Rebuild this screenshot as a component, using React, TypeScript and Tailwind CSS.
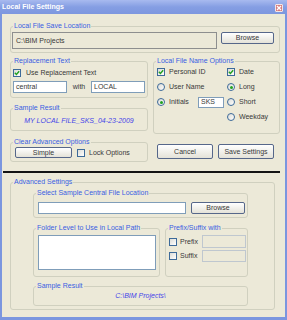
import React from 'react';

const Group: React.FC<{ title: string; className?: string; children?: React.ReactNode }> = ({ title, className = '', children }) => (
  <fieldset className={`min-w-0 border border-[#D0D0BF] rounded-[3px] ${className}`}>
    <legend className="ml-[2px] px-[1px] h-[8px] leading-[8px] text-[#3A5EE2]">{title}</legend>
    {children}
  </fieldset>
);

const Check: React.FC<{ checked?: boolean }> = ({ checked }) => (
  <span className="w-[8px] h-[8px] shrink-0 border border-[#3D6A99] bg-gradient-to-br from-[#DCDCD7] to-white flex items-center justify-center">
    {checked && (
      <svg width="6" height="6" viewBox="0 0 6 6">
        <path d="M0.8 2.8 L2.4 4.4 L5.2 1.2" stroke="#21A121" strokeWidth="1.4" fill="none" />
      </svg>
    )}
  </span>
);

const Radio: React.FC<{ checked?: boolean }> = ({ checked }) => (
  <span className="w-[8px] h-[8px] shrink-0 rounded-full border border-[#3D6A99] bg-gradient-to-br from-[#DCDCD7] to-white flex items-center justify-center">
    {checked && <span className="w-[3px] h-[3px] rounded-full bg-[#21A121]" />}
  </span>
);

const Button: React.FC<{ label: string; className?: string }> = ({ label, className = '' }) => (
  <div className={`shrink-0 flex items-center justify-center border border-[#56678A] rounded-[2px] bg-gradient-to-b from-white to-[#E4E2D8] ${className}`}>
    {label}
  </div>
);

const TextBox: React.FC<{ value?: string; className?: string }> = ({ value = '', className = '' }) => (
  <div className={`shrink-0 flex items-center px-[2px] border border-[#7F9DB9] bg-white ${className}`}>
    {value}
  </div>
);

export default function App() {
  return (
    <div className="w-[287px] h-[320px] overflow-hidden flex flex-col bg-[#7B96DF] font-['Liberation_Sans',Arial,sans-serif] text-[7px] leading-[8px] text-[#383838]">
      {/* Title bar */}
      <div className="h-[14px] shrink-0 flex items-center justify-between pl-[2px] pr-[4px] bg-gradient-to-b from-[#A8BAEF] via-[#859EE3] to-[#7D97DF]">
        <span className="font-bold text-white">Local File Settings</span>
        <span className="w-[8px] h-[8px] mt-[1px] rounded-[1px] border border-[#F3E6E6] bg-[#D57B7E] flex items-center justify-center">
          <svg width="6" height="6" viewBox="0 0 6 6">
            <path d="M1 1 L5 5 M5 1 L1 5" stroke="white" strokeWidth="1.3" />
          </svg>
        </span>
      </div>

      <div className="flex-1 mx-[2px] mb-[3px] bg-[#ECE9D8] flex flex-col">
        {/* Local File Save Location */}
        <Group title="Local File Save Location" className="mt-[8px] ml-[8px] mr-[5px]">
          <div className="pt-[2px] pl-[1px] pr-[5px] pb-[3px] flex items-start gap-[4px]">
            <div className="w-[205px] h-[17px] shrink-0 flex items-center px-[3px] border border-[#8E8F8F] bg-[#ECE9D8]">C:\BIM Projects</div>
            <Button label="Browse" className="w-[53px] h-[12px]" />
          </div>
        </Group>

        <div className="mt-[4px] ml-[8px] mr-[5px] flex items-start">
          {/* Left column */}
          <div className="w-[138px] shrink-0 flex flex-col">
            <Group title="Replacement Text">
              <div className="pt-[4px] pl-[2px] pr-[2px] pb-[4px]">
                <div className="h-[7px] flex items-center gap-[5px]">
                  <Check checked />
                  <span>Use Replacement Text</span>
                </div>
                <div className="mt-[5px] h-[12px] flex">
                  <TextBox value="central" className="w-[54px] h-[12px]" />
                  <span className="w-[24px] flex items-center justify-center">with</span>
                  <TextBox value="LOCAL" className="w-[54px] h-[12px]" />
                </div>
              </div>
            </Group>

            <Group title="Sample Result" className="mt-[6px]">
              <div className="pt-[5px] pb-[5px] h-[18px] text-center italic text-[#4444E8]">MY LOCAL FILE_SKS_04-23-2009</div>
            </Group>

            <Group title="Clear Advanced Options" className="mt-[7px]">
              <div className="pt-[1px] pl-[4px] pb-[3px] h-[15px] flex items-center">
                <Button label="Simple" className="w-[57px] h-[11px]" />
                <span className="ml-[5px]"><Check /></span>
                <span className="ml-[4px]">Lock Options</span>
              </div>
            </Group>
          </div>

          {/* Right column */}
          <div className="w-[127px] ml-[5px] shrink-0 flex flex-col">
            <Group title="Local File Name Options">
              <div className="pt-[1px] pl-[3px] pb-[10px] grid grid-cols-[70px_1fr] gap-y-[3px]">
                <div className="h-[12px] flex items-center gap-[4px]"><Check checked /><span>Personal ID</span></div>
                <div className="h-[12px] flex items-center gap-[4px]"><Check checked /><span>Date</span></div>
                <div className="h-[12px] flex items-center gap-[4px]"><Radio /><span>User Name</span></div>
                <div className="h-[12px] flex items-center gap-[4px]"><Radio checked /><span>Long</span></div>
                <div className="h-[12px] flex items-center gap-[4px]">
                  <Radio checked />
                  <span>Initials</span>
                  <TextBox value="SKS" className="ml-auto mr-[3px] w-[26px] h-[11px]" />
                </div>
                <div className="h-[12px] flex items-center gap-[4px]"><Radio /><span>Short</span></div>
                <div className="h-[12px]" />
                <div className="h-[12px] flex items-center gap-[4px]"><Radio /><span>Weekday</span></div>
              </div>
            </Group>
            <div className="mt-[10px] pl-[4px] flex gap-[5px]">
              <Button label="Cancel" className="w-[56px] h-[15px]" />
              <Button label="Save Settings" className="w-[56px] h-[15px]" />
            </div>
          </div>
        </div>

        {/* Separator */}
        <div className="mt-[9px] ml-[1px] mr-[5px] h-[2px] bg-[#141414]" />

        {/* Advanced Settings */}
        <Group title="Advanced Settings" className="mt-[5px] ml-[8px] mr-[10px]">
          <div className="pl-[22px] pb-[3px] flex flex-col">
            <Group title="Select Sample Central File Location" className="mt-[3px] w-[215px]">
              <div className="pt-[5px] pl-[4px] pb-[3px] flex gap-[5px]">
                <TextBox className="w-[148px] h-[12px]" />
                <Button label="Browse" className="w-[54px] h-[12px]" />
              </div>
            </Group>

            <div className="mt-[6px] w-[215px] flex items-stretch gap-[5px]">
              <Group title="Folder Level to Use in Local Path" className="w-[127px] shrink-0">
                <div className="pt-[3px] pl-[4px] pb-[6px]">
                  <div className="w-[118px] h-[35px] border border-[#7F9DB9] bg-white" />
                </div>
              </Group>
              <Group title="Prefix/Suffix with" className="flex-1">
                <div className="pt-[3px] pl-[3px] pr-[1px] flex flex-col gap-[2px]">
                  <div className="h-[13px] flex items-center">
                    <Check />
                    <span className="ml-[3px]">Prefix</span>
                    <div className="ml-auto w-[44px] h-[13px] border border-[#BFC7CF] bg-[#ECE9D8]" />
                  </div>
                  <div className="h-[12px] flex items-center">
                    <Check />
                    <span className="ml-[3px]">Suffix</span>
                    <div className="ml-auto w-[44px] h-[12px] border border-[#BFC7CF] bg-[#ECE9D8]" />
                  </div>
                </div>
              </Group>
            </div>

            <Group title="Sample Result" className="mt-[5px] w-[215px]">
              <div className="pt-[2px] pb-[5px] h-[15px] text-center italic text-[#4444E8]">C:\BIM Projects\</div>
            </Group>
          </div>
        </Group>
      </div>
    </div>
  );
}
